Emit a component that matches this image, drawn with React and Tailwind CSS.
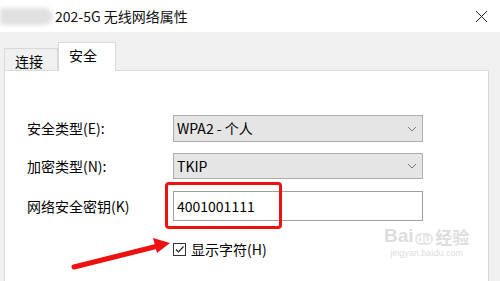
import React from "react";

const font = { fontFamily: '"Noto Sans CJK SC", "Noto Sans", sans-serif' };

function Chevron() {
  return (
    <svg width="10" height="6" viewBox="0 0 10 6" className="text-[#7a7a7a]">
      <path d="M1 1 L5 5 L9 1" fill="none" stroke="currentColor" strokeWidth="1" />
    </svg>
  );
}

export default function App() {
  return (
    <div className="relative w-[500px] h-[281px] overflow-hidden bg-[#f0f0f0] text-black" style={font}>
      {/* title bar */}
      <div className="h-[32px] bg-white flex items-center">
        <div className="ml-0 w-[53px] h-[17px] bg-[#e0e0e0] blur-[2px] rounded-r-full" />
        <div className="ml-[2px] text-[14px] leading-none text-[#111]">202-5G 无线网络属性</div>
        <div className="ml-auto mr-[12px] w-[13px] h-[13px] flex items-center justify-center">
          <svg width="13" height="13" viewBox="0 0 13 13">
            <path d="M1 1 L12 12 M12 1 L1 12" stroke="#222" strokeWidth="1" />
          </svg>
        </div>
      </div>

      {/* tabs */}
      <div className="flex items-end h-[38px] pl-[4px]">
        <div className="w-[54px] h-[22px] border border-b-0 border-[#d9d9d9] bg-[#f0f0f0] text-[14px] leading-none flex items-center pl-[10px] pt-[2px]">
          连接
        </div>
        <div className="relative z-10 -mb-px w-[58px] h-[29px] border border-b-0 border-[#d9d9d9] bg-white text-[14px] leading-none flex items-start pl-[10px] pt-[5px]">
          安全
        </div>
      </div>

      {/* panel */}
      <div className="relative ml-[4px] w-[485px] h-[220px] bg-white border border-[#d9d9d9] pl-[22px] pt-[44px] text-[14px]">
        <div className="flex items-center h-[27px]">
          <div className="w-[146px]">安全类型(E):</div>
          <div className="w-[250px] h-[27px] bg-[#e5e5e5] border border-[#adadad] flex items-center pl-[3px] pr-[5px]">
            <span>WPA2 - 个人</span>
            <span className="ml-auto"><Chevron /></span>
          </div>
        </div>
        <div className="flex items-center h-[26px] mt-[11px]">
          <div className="w-[146px]">加密类型(N):</div>
          <div className="w-[250px] h-[26px] bg-[#e5e5e5] border border-[#adadad] flex items-center pl-[3px] pr-[5px]">
            <span>TKIP</span>
            <span className="ml-auto"><Chevron /></span>
          </div>
        </div>
        <div className="flex items-center h-[30px] mt-[12px]">
          <div className="w-[146px]">网络安全密钥(K)</div>
          <div className="relative w-[250px] h-[30px] bg-white border border-[#a0a0a0] flex items-center pl-[3px]">
            <span>4001001111</span>
            <div className="absolute left-[-9px] top-[-10px] w-[117px] h-[47px] border-[3px] border-[#ee1111] rounded-[4px]" />
          </div>
        </div>
        <div className="flex items-center mt-[18px] ml-[146px]">
          <div className="w-[13px] h-[13px] border border-[#333] flex items-center justify-center">
            <svg width="11" height="11" viewBox="0 0 11 11">
              <path d="M2 5.5 L4.5 8 L9.5 2.5" fill="none" stroke="#222" strokeWidth="1.2" />
            </svg>
          </div>
          <span className="ml-[5px]">显示字符(H)</span>
        </div>

        {/* watermark */}
        <div className="absolute left-[379px] top-[155px] flex flex-col items-center text-[#dddddd] select-none">
          <div className="flex items-end leading-none">
            <span className="text-[19px] font-bold" style={{ fontFamily: '"Liberation Sans", sans-serif' }}>Bai</span>
            <span className="relative mx-[1px] text-[12px] font-bold px-[2px] rounded-full bg-[#e4e4e4] text-white" style={{ fontFamily: '"Liberation Sans", sans-serif' }}>du</span>
            <span className="text-[17px] font-bold ml-[1px]">经验</span>
          </div>
          <div className="text-[9px] leading-none mt-[4px]" style={{ fontFamily: '"Liberation Sans", sans-serif' }}>jingyan.baidu.com</div>
        </div>
      </div>

      {/* red arrow */}
      <svg className="absolute left-0 top-0 pointer-events-none" width="500" height="281" viewBox="0 0 500 281">
        <path d="M74 267 L158 246" stroke="#ee1111" strokeWidth="5" strokeLinecap="round" />
        <path d="M170 243 L153 238 L157 253 Z" fill="#ee1111" />
      </svg>
    </div>
  );
}
